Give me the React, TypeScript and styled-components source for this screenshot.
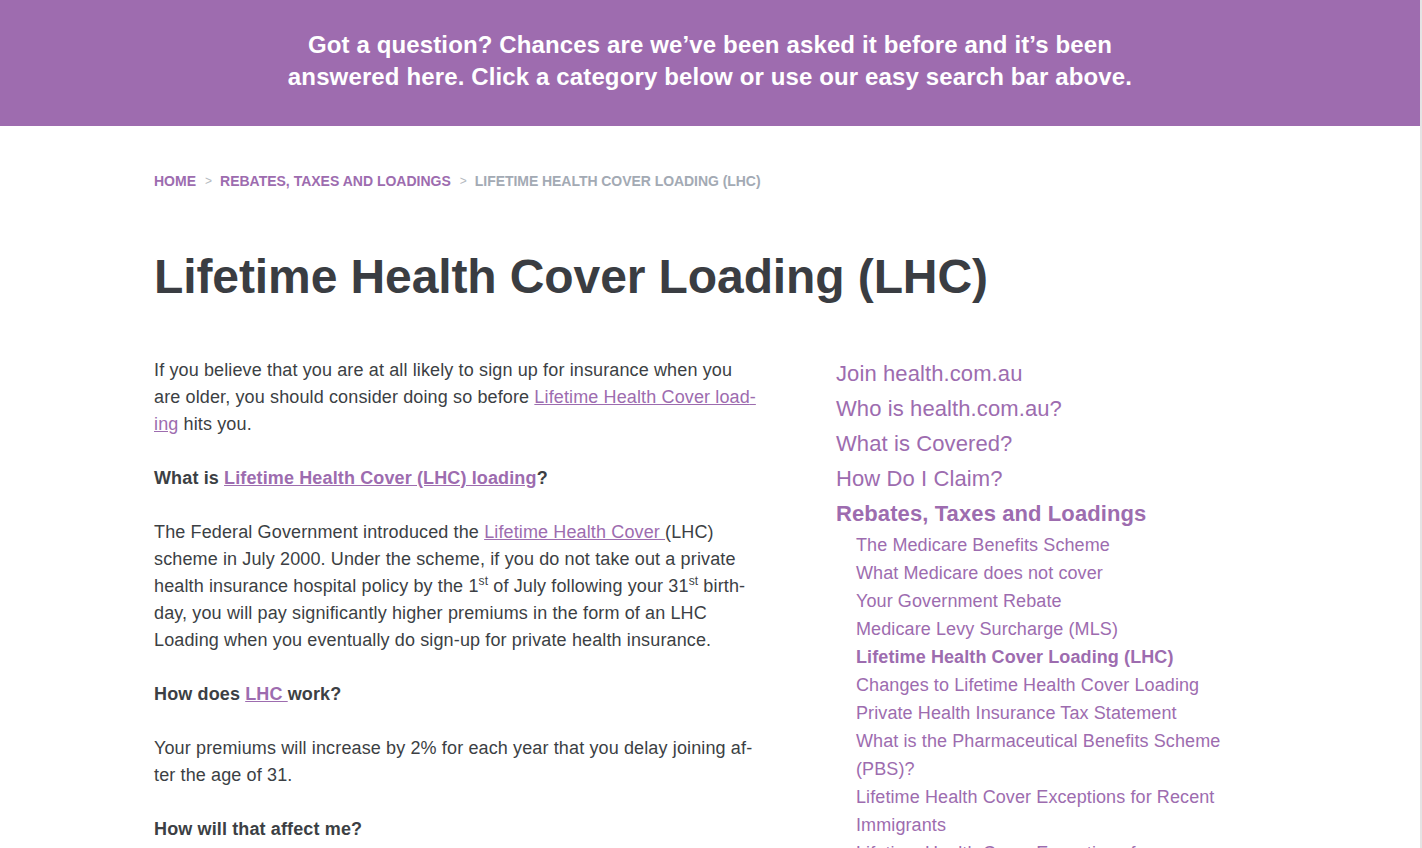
import React from "react";
import styled, { createGlobalStyle } from "styled-components";

const Global = createGlobalStyle`
  html, body { margin: 0; padding: 0; background: #fff; }
  body { font-family: "Liberation Sans", Arial, sans-serif; color: #3c3f44; }
`;

const Page = styled.div`
  width: 1420px;
  min-height: 848px;
  border-right: 2px solid #e4e4e4;
  overflow: hidden;
`;

const Banner = styled.header`
  background: #9e6caf;
  height: 126px;
  box-sizing: border-box;
  padding-bottom: 4px;
  display: flex;
  align-items: center;
  justify-content: center;
`;

const BannerText = styled.p`
  margin: 0;
  color: #fff;
  font-weight: 700;
  font-size: 24px;
  letter-spacing: 0.13px;
  line-height: 32px;
  text-align: center;
  width: 860px;
`;

const Container = styled.div`
  width: 1112px;
  margin: 0 auto;
`;

const Crumbs = styled.nav`
  display: flex;
  align-items: center;
  gap: 8px;
  margin-top: 46px;
  font-size: 14px;
  font-weight: 700;
  text-transform: uppercase;
  line-height: 18px;
`;

const Crumb = styled.a<{ $current?: boolean }>`
  color: ${(p) => (p.$current ? "#a3aab4" : "#9d6caf")};
  text-decoration: none;
  letter-spacing: ${(p) => (p.$current ? "-0.05px" : "0")};
`;

const Sep = styled.span`
  color: #b4b9c0;
  font-weight: 400;
  font-size: 12px;
  margin-left: 1px;
`;

const Title = styled.h1`
  margin: 59px 0 0;
  font-size: 48px;
  letter-spacing: -0.1px;
  line-height: 56px;
  font-weight: 700;
  color: #3a3d42;
`;

const Columns = styled.div`
  display: grid;
  grid-template-columns: 604px 1fr;
  column-gap: 78px;
  margin-top: 48px;
`;

const Main = styled.article`
  padding-top: 4px;
  font-size: 18px;
  letter-spacing: 0.13px;
  line-height: 27px;
`;

const Para = styled.p`
  margin: 0 0 27px;
`;

const Lead = styled.p`
  margin: 0 0 27px;
  font-weight: 700;
`;

const Link = styled.a<{ $bold?: boolean }>`
  color: #9d6caf;
  text-decoration: underline;
  font-weight: ${(p) => (p.$bold ? 700 : 400)};
`;

const Sup = styled.sup`
  font-size: 12px;
  line-height: 0;
  vertical-align: 7px;
`;

const Side = styled.aside`
  padding-top: 3px;
  letter-spacing: 0.1px;
`;

const TopList = styled.ul`
  list-style: none;
  margin: 0;
  padding: 0;
`;

const TopItem = styled.li<{ $active?: boolean }>`
  font-size: 22px;
  line-height: 35px;
  font-weight: ${(p) => (p.$active ? 700 : 400)};
  color: #9d6caf;
`;

const SubList = styled.ul`
  list-style: none;
  margin: 0 0 0 20px;
  padding: 0;
  width: 380px;
`;

const SubItem = styled.li<{ $active?: boolean }>`
  font-size: 18px;
  line-height: 28px;
  font-weight: ${(p) => (p.$active ? 700 : 400)};
  color: #9d6caf;
`;

const subs = [
  "The Medicare Benefits Scheme",
  "What Medicare does not cover",
  "Your Government Rebate",
  "Medicare Levy Surcharge (MLS)",
  "Lifetime Health Cover Loading (LHC)",
  "Changes to Lifetime Health Cover Loading",
  "Private Health Insurance Tax Statement",
  "What is the Pharmaceutical Benefits Scheme (PBS)?",
  "Lifetime Health Cover Exceptions for Recent Immigrants",
  "Lifetime Health Cover Exceptions for Australians Overseas",
];

export default function App() {
  return (
    <Page lang="en">
      <Global />
      <Banner>
        <BannerText>
          Got a question? Chances are we’ve been asked it before and it’s been answered here. Click a category
          below or use our easy search bar above.
        </BannerText>
      </Banner>
      <Container>
        <Crumbs>
          <Crumb href="#">Home</Crumb>
          <Sep>&gt;</Sep>
          <Crumb href="#">Rebates, Taxes and Loadings</Crumb>
          <Sep>&gt;</Sep>
          <Crumb $current>Lifetime Health Cover Loading (LHC)</Crumb>
        </Crumbs>
        <Title>Lifetime Health Cover Loading (LHC)</Title>
        <Columns>
          <Main>
            <Para>
              If you believe that you are at all likely to sign up for insurance when you are older, you should
              consider doing so before <Link href="#">Lifetime Health Cover load&shy;ing</Link> hits you.
            </Para>
            <Lead>
              What is <Link href="#" $bold>Lifetime Health Cover (LHC) loading</Link>?
            </Lead>
            <Para>
              The Federal Government introduced the <Link href="#">Lifetime Health Cover </Link>(LHC) scheme in
              July 2000. Under the scheme, if you do not take out a private health insurance hospital policy by
              the 1<Sup>st</Sup> of July following your 31<Sup>st</Sup> birth&shy;day, you will pay significantly
              higher premiums in the form of an LHC Loading when you eventually do sign-up for private health
              insurance.
            </Para>
            <Lead>
              How does <Link href="#" $bold>LHC </Link>work?
            </Lead>
            <Para>
              Your premiums will increase by 2% for each year that you delay joining af&shy;ter the age of 31.
            </Para>
            <Lead>How will that affect me?</Lead>
          </Main>
          <Side>
            <TopList>
              <TopItem>Join health.com.au</TopItem>
              <TopItem>Who is health.com.au?</TopItem>
              <TopItem>What is Covered?</TopItem>
              <TopItem>How Do I Claim?</TopItem>
              <TopItem $active>Rebates, Taxes and Loadings</TopItem>
            </TopList>
            <SubList>
              {subs.map((s) => (
                <SubItem key={s} $active={s === "Lifetime Health Cover Loading (LHC)"}>
                  {s}
                </SubItem>
              ))}
            </SubList>
          </Side>
        </Columns>
      </Container>
    </Page>
  );
}
